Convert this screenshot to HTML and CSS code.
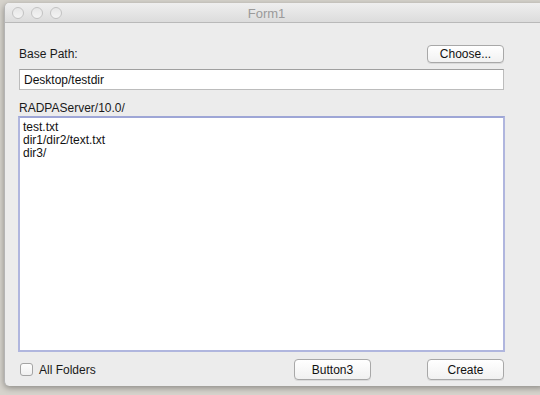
FILE: index.html
```html
<!DOCTYPE html>
<html lang="en">
<head>
  <meta charset="UTF-8">
  <title>Form1</title>
  <link rel="stylesheet" href="styles.css">
</head>
<body>
  <div class="window">
    <div class="titlebar">
      <div class="lights">
        <span class="light"></span>
        <span class="light"></span>
        <span class="light"></span>
      </div>
      <div class="title">Form1</div>
    </div>

    <div class="content">
      <div class="row-top">
        <label class="label">Base Path:</label>
        <button class="btn">Choose...</button>
      </div>
      <input class="field" type="text" value="Desktop/testdir">

      <div class="label list-label">RADPAServer/10.0/</div>
      <div class="listbox">
        <div class="item">test.txt</div>
        <div class="item">dir1/dir2/text.txt</div>
        <div class="item">dir3/</div>
      </div>

      <div class="row-bottom">
        <label class="check">
          <span class="box"></span>
          All Folders
        </label>
        <div class="buttons">
          <button class="btn">Button3</button>
          <button class="btn">Create</button>
        </div>
      </div>
    </div>
  </div>
</body>
</html>
```

FILE: styles.css
```css
* {
  margin: 0;
  padding: 0;
  box-sizing: border-box;
  font-family: 'Liberation Sans', Arial, sans-serif;
}

body {
  background-color: #d6d3cc;
  width: 540px;
  height: 395px;
  overflow: hidden;
  padding: 3px 0 0 4px;
}

.window {
  width: 540px;
  height: 383px;
  background-color: #ececec;
  border-left: 1px solid #b4b4b4;
  border-radius: 5px 0 0 5px;
  box-shadow: 0 2px 6px rgba(0, 0, 0, 0.35);
  overflow: hidden;
}

.titlebar {
  height: 20px;
  display: flex;
  align-items: center;
  position: relative;
  background: linear-gradient(#efefef, #dcdcdc);
  border-bottom: 1px solid #b9b9b9;
}

.lights {
  display: flex;
  gap: 7px;
  padding-left: 7px;
}

.light {
  width: 12px;
  height: 12px;
  border-radius: 50%;
  border: 1px solid #c2c2c2;
  background: linear-gradient(#e6e6e6, #f4f4f4);
}

.title {
  position: absolute;
  left: 0;
  right: 0;
  text-align: center;
  padding-right: 16px;
  padding-top: 1px;
  font-size: 13px;
  color: #9a9a9a;
}

.content {
  padding: 22px 0 0 14px;
  width: 499px;
}

.row-top {
  display: flex;
  justify-content: space-between;
  align-items: center;
}

.label {
  font-size: 12px;
  color: #1a1a1a;
}

.btn {
  width: 77px;
  height: 18px;
  background: linear-gradient(#ffffff, #f1f1f1);
  border: 1px solid #a8a8a8;
  border-radius: 4px;
  font-size: 12px;
  color: #111;
  box-shadow: 0 1px 0 rgba(0, 0, 0, 0.08);
}

.field {
  display: block;
  width: 485px;
  height: 21px;
  margin-top: 6px;
  padding: 0 4px;
  border: 1px solid #bcbcbc;
  border-top-color: #9f9f9f;
  background-color: #fff;
  font-size: 12px;
  color: #111;
  outline: none;
}

.list-label {
  margin-top: 11px;
  line-height: 14px;
}

.listbox {
  width: 487px;
  height: 236px;
  margin-top: 1px;
  margin-left: -1px;
  padding: 3px 3px;
  background-color: #fff;
  border: 2px solid #b0b6de;
  border-top-color: #9ea6d6;
}

.item {
  font-size: 12px;
  line-height: 13px;
  color: #111;
}

.row-bottom {
  display: flex;
  justify-content: space-between;
  align-items: center;
  margin-top: 7px;
}

.check {
  display: flex;
  align-items: center;
  gap: 6px;
  font-size: 12px;
  color: #1a1a1a;
  padding-left: 1px;
}

.box {
  width: 13px;
  height: 13px;
  border: 1px solid #a4a4a4;
  border-radius: 3px;
  background: linear-gradient(#fdfdfd, #f0f0f0);
}

.buttons {
  display: flex;
  gap: 56px;
}

.buttons .btn {
  height: 21px;
}
```
